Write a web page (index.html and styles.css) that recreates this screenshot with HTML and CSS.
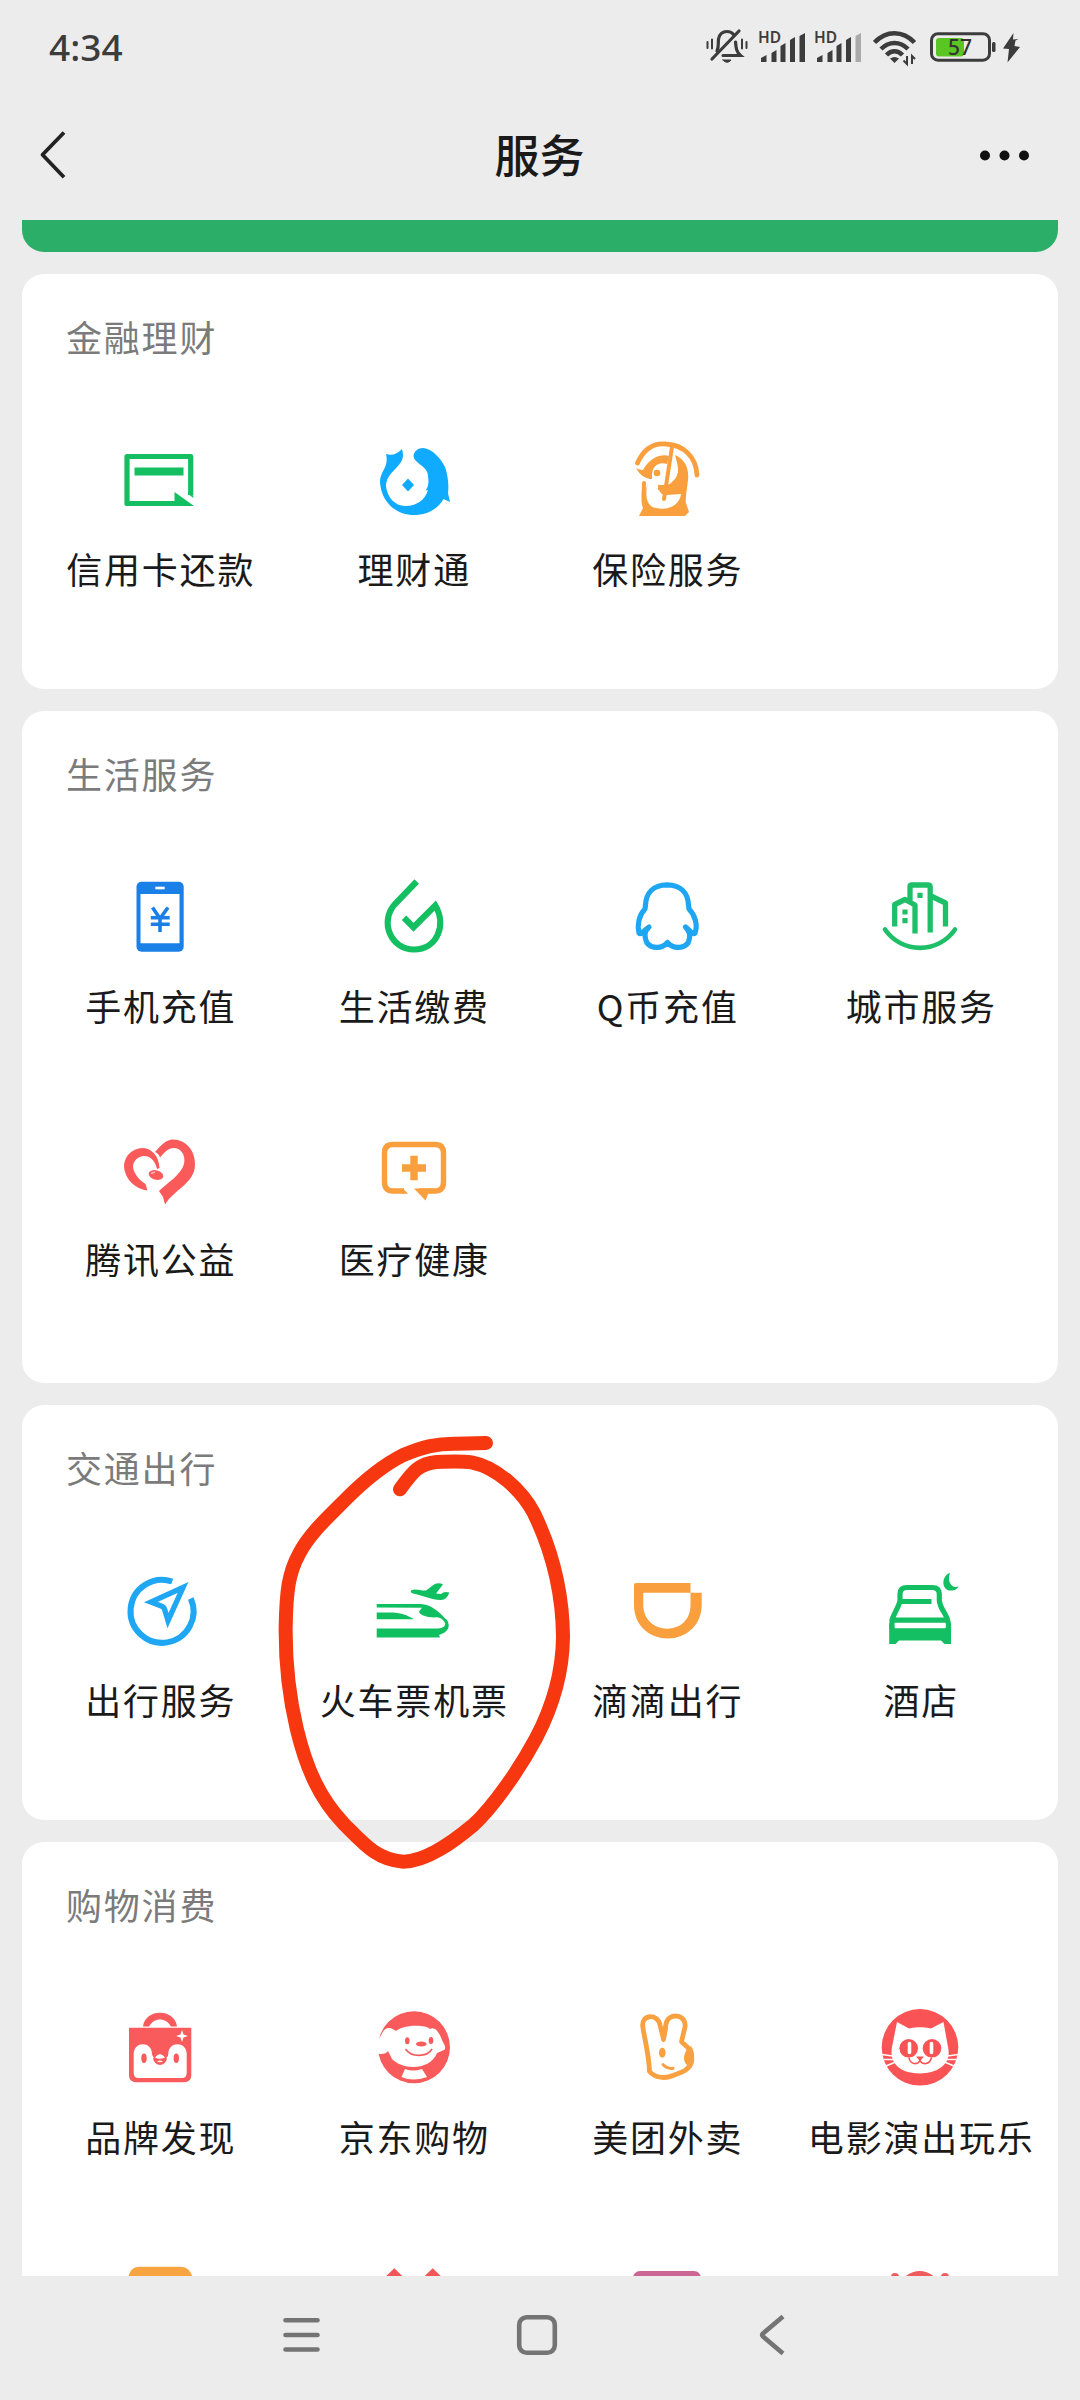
FILE: index.html
```html
<!DOCTYPE html>
<html lang="zh-CN">
<head>
<meta charset="utf-8">
<title>服务</title>
<link rel="stylesheet" href="styles.css">
</head>
<body>
<div class="screen">
  <div class="status">
    <span class="time">4:34</span>
    <div class="indicators">
      <svg class="bell" width="42" height="40" viewBox="0 0 42 40" fill="none" stroke="#3c3c3c" stroke-width="3.200" stroke-linecap="round"><path d="M11 24c2-4 1-8 1.500-12C13.500 7 17 4.500 21 4.500c3 0 5 1 6.500 3M29.500 15c.5 6 1 10 5 13.500H17"/><path d="M33 4L6 32"/><path d="M1.500 15v6M6 12.500v9M36 12.500v9M40.500 15v6" stroke-width="2"/><path d="M17 33h8c-2 3-6 3-8 0z" fill="#3c3c3c" stroke-width="1"/></svg>
      <svg class="signal" width="48" height="40" viewBox="0 0 48 40" fill="#3c3c3c"><text class="hd" x="0" y="16" textLength="23">HD</text><path d="M3 35v-4l5.500-3v7zM13.500 35v-9l5-3v12zM22.500 35V19l5-3v19zM32 35V13l5-3v25zM41.500 35V9l5.500-3v29z"/></svg>
      <svg class="signal second" width="48" height="40" viewBox="0 0 48 40" fill="#3c3c3c"><text class="hd" x="0" y="16" textLength="23">HD</text><path d="M3 35v-4l5.500-3v7zM13.500 35v-9l5-3v12zM22.500 35V19l5-3v19zM32 35V13l5-3v25z"/><path d="M41.500 35V9l5.500-3v29z" fill="#aaa"/></svg>
      <svg class="wifi" width="44" height="40" viewBox="0 0 44 40" fill="none" stroke="#3c3c3c" stroke-width="4.500"><path d="M1.500 15.500C13 3 30 3 41.500 15.500M8 22c8-8 19-8 27 0M13.500 28c5-5 11-5 16 0"/><path d="M17 31.500c3-2 6-2 9 0L21.500 36z" fill="#3c3c3c" stroke="none"/><path d="M34 29v8l-3.500-3.500M39 37v-8l3 3" stroke-width="2"/></svg>
      <svg class="battery" width="92" height="40" viewBox="0 0 92 40"><rect x="1.500" y="6.700" width="58" height="26.500" rx="6.500" fill="none" stroke="#3c3c3c" stroke-width="3"/><rect x="6" y="11" width="28" height="18.500" rx="3" fill="#5bc524"/><text class="level" x="18" y="28">57</text><rect x="62" y="15" width="3.500" height="10" rx="1.500" fill="#3c3c3c"/><path d="M83.500 6L73 21.500l6 .5-1.500 13.500L90 20l-5.500-1 1-5.500 3-1.500-5.500.5z" fill="#3c3c3c"/></svg>
    </div>
  </div>
  <div class="header">
    <svg width="40" height="56" viewBox="0 0 40 56" fill="none" stroke="#222" stroke-width="3.800" stroke-linejoin="round"><path d="M26 5.500L4.500 27.800 26 50.200"/></svg>
    <h1>服务</h1>
    <svg width="52" height="16" viewBox="0 0 52 16" fill="#111"><circle cx="6" cy="8.500" r="5"/><circle cx="25.500" cy="8.500" r="5"/><circle cx="45" cy="8.500" r="5"/></svg>
  </div>

  <main>
    <div class="banner"></div>

    <section class="card">
      <h2>金融理财</h2>
      <div class="grid">
        <div class="item"><svg viewBox="-42 -42 84 84" fill="none" stroke="#13bf60" stroke-width="5.200"><path d="M30.700 15V-23.500H-33V23.500H20" stroke-linejoin="round"/><path d="M-25.500-12.500h49v8h-49zM14.500 12L34 26H14.500zM28.200 12l5.100 3.800V18l-5.100-4z" fill="#13bf60" stroke="none"/></svg><span>信用卡还款</span></div>
        <div class="item"><svg viewBox="-42 -42 84 84" fill="#10aaff"><path d="M-27-26C-21-24-16-26-11-31-10-27-9-23-12-18-18-9-27-5-27 6-26 17-18 26-8 26 4 26 12 20 15 10L12.500 10.500C16 6 16 1 14.500-7 12-15 1-17 .5-24 1-29 5-32 10-32 20-31 28-21 32-13 35-5 36 6 35 13L37 22 30.500 19C25 29 14 35 1 35-18 35-32 21-33 2-33-5-29-10-27.500-14-26-18-26-22-27-26zM-5-1.500L1 5-5 11.500-11 5z"/></svg><span>理财通</span></div>
        <div class="item"><svg viewBox="-42 -42 84 84" fill="#fa9f3d"><path d="M-29.500-17C-22-34-11-37-1-36 17-35 29-23 30-5" fill="none" stroke="#fa9f3d" stroke-width="4.800" stroke-linecap="round"/><path d="M-24-10C-16-24-5-26 2-24l-2 8C-9-19-15-13-15-5v4C-22-1-27-5-31-12c4 2 6 2 7 2zM8-25c11 5 14 14 13 25-1 10-3 18-2 23l3 9-4 4h-46l4-8c3-4 2-10 2-16l5-15c-6 15-5 29 6 31C3 31 13 24 14 14L0 15c-4 0-7-2-8-5h-1V5h5l7-1C7 0 11-3 11-10 11-16 9-20 8-25z"/><path d="M-23 3c0 12-2 18 1 25M5-33L-3 19" fill="none" stroke="#fa9f3d" stroke-width="4" stroke-linecap="round"/><circle cx="-10" cy="-7" r="3.300"/></svg><span>保险服务</span></div>
      </div>
    </section>

    <section class="card tall">
      <h2>生活服务</h2>
      <div class="grid">
        <div class="item"><svg viewBox="-42 -42 84 84"><rect x="-23.500" y="-35.300" width="47.200" height="70" rx="5" fill="#1a80e8"/><path d="M-19.500-23h39v49.300h-39z" fill="#fff"/><path d="M-4.700-29h9.400" stroke="#fff" stroke-width="2.600"/><path d="M-7.500-9.500L0 1.500 8-9.500M0 1.500V15M-9.200.8H9.700M-9.200 7.200H9.700" fill="none" stroke="#1a80e8" stroke-width="3.600"/></svg><span>手机充值</span></div>
        <div class="item"><svg viewBox="-42 -42 84 84" fill="none" stroke="#13bf60" stroke-width="6.200"><path d="M3.700-35.500L-18-13C-34 5-22 32.500 1 32.500 24 32.500 34 8 22.300-11.500L.5 10.300-9 .8"/></svg><span>生活缴费</span></div>
        <div class="item"><svg viewBox="-42 -42 84 84" fill="none" stroke="#1ea6f2" stroke-width="5.200" stroke-linejoin="round"><path d="M0-32.200C-14-32-21-24-21.500-12L-22-8C-28-2-30 8-28 16-27 18-24 15-22 13L-18 10C-23 15-23 19-20 26-15 32-5 32 .5 25.500 6 32 16 32 21 26 24 19 23 15 18.500 10L22 13C24 15 27 18 28 16 31 8 28-2 22-8L21.500-12C21-24 14-32 0-32.200z"/></svg><span>Q币充值</span></div>
        <div class="item"><svg viewBox="-42 -42 84 84" fill="none" stroke="#1ebf68" stroke-width="5.300" stroke-linejoin="round"><path d="M-35 12.500C-18 37 18 37 35 12.500" stroke-linecap="round" stroke-width="4.600"/><path d="M-25.300 9.500V-12.500L-15-17.500-5-12V16.500M-10-16V-30.500Q-10-32-8-32H8Q10.200-32 10.200-30V15.500M12-20.500L25.500-14V9.500"/><path d="M-2.600-24.300h5.200v5.200h-5.200zM-17.600-7.600h5.200v5.200h-5.200zM-17.600 1h5.200v5.200h-5.200z" fill="#1ebf68" stroke="none"/></svg><span>城市服务</span></div>
        <div class="item"><svg viewBox="-42 -42 84 84" fill="#fa5a5a"><path d="M-12.500 20.500C-28 18-36 6-36-5-35-15-27-21.500-18-22-9-22-1-15-.5-2L-3-1C-5-10-10-14-16-14-22-14-27-9-27-3-26 5-19 11-14.500 14zM-5-18C2-26 6-30 13-30.500 26-30 35-20 35-6 35 5 29 11 21 18 14 24 10 27 5 34.500L3 27-1 21C7 13 21 5 24-6 26-16 20-22 14-22 7-21.500 5-18 0-12.500-1-15-2-17-5-18z"/><ellipse cx="-4" cy="5" rx="7.500" ry="4.600" transform="rotate(16 -4 5)"/><path d="M-9 3.500l4-1.500" stroke="#fbb" stroke-width="1.500"/></svg><span>腾讯公益</span></div>
        <div class="item"><svg viewBox="-42 -42 84 84" fill="none" stroke="#fa9f3d" stroke-width="5.400"><path d="M-9 21H-20Q-28.500 21-28.500 12V-17Q-28.500-25.500-20-25.500H22Q30.500-25.500 30.500-17V12Q30.500 21 22 21H6"/><path d="M-10 18.400l5 5.300h-6zM1 18.400L12.500 30.500 15.500 23H21v-4.600zM-2.700-14.300h7.400v8.600H13v7.400H4.700v8.600h-7.400V1.700H-11v-7.400h8.300z" fill="#fa9f3d" stroke="none"/></svg><span>医疗健康</span></div>
      </div>
    </section>

    <section class="card">
      <h2>交通出行</h2>
      <div class="grid">
        <div class="item"><svg viewBox="-42 -42 84 84" fill="none" stroke="#1fa7f4" stroke-width="6"><path d="M12.200-29.500A31.500 31.500 0 1 0 30.800-12.500"/><path d="M23-23.500L-9-9 1.800-4.800Q4-4 4.500-2L8 9.500z" stroke-width="5.400" stroke-linejoin="miter"/></svg><span>出行服务</span></div>
        <div class="item"><svg viewBox="-42 -42 84 84" fill="#10bf60"><path d="M-36.300-7H8C21-6 27 3 34 9 38 16 35 21 26 24L27 26.500H-36.300V17.600H25C30 17 33 15 32 12 30 8 27 6.500 24 6.300 15 7 5 4 6.300 0L9-3.300-36.300-3.500zM-36.300 1.500H-20C-12 2-6 4 1 8.200H-36.300z"/><path d="M-2-20.500C2-23 8-20 13-20.500L21-26.500Q26-29 30-26.500L23-17.500 28-17Q31-20 36.300-18.500C35-14 32-11 28-11 18-11 9-16 0-17.500Q-3-18.500-2-20.500z"/></svg><span>火车票机票</span></div>
        <div class="item"><svg viewBox="-42 -42 84 84" fill="#fa9f3d"><path fill-rule="evenodd" d="M-31-28H23.500V-18.300H34.700V-6C34.700 14 19 27.500 1 27.500-18 27.500-33 14-33-6V-26Q-33-28-31-28zM-23.700-18.300V-6C-23.700 9-12 17.700 0 17.700 13 17.700 23.500 9 23.500-6V-18.300z"/></svg><span>滴滴出行</span></div>
        <div class="item"><svg viewBox="-42 -42 84 84" fill="none" stroke="#13bf62" stroke-width="5.200"><path d="M-28 19V9C-26 2-20-6-20-11V-17Q-20-23.500-13-23.500H12Q19.300-23.500 19.300-17V-11C20 0 28 2 28.500 14V19M-20-9.500H11.500M-28 9.200H28"/><path d="M-30.800 12L-25 17.300H25L31 12V33H24.500L21 29.500H-21L-24.500 33h-6.300zM30-38.500C20-34 22-19 32-20.500 35-20.500 37-22 38.500-24.500 31-22 27-30 30-38.500z" fill="#13bf62" stroke="none"/></svg><span>酒店</span></div>
      </div>
    </section>

    <section class="card">
      <h2>购物消费</h2>
      <div class="grid">
        <div class="item"><svg viewBox="-42 -42 84 84" fill="#f95b5c"><path d="M-17-21.500C-15-40 15-40 17-21.500H11C6-31-6-31-11-21.500z"/><path d="M-31-20.300H31.300V27Q31.300 34.300 24 34.300H-24Q-31 34.300-31 27z"/><path d="M-26.300 6C-26.300-7-8-7-8 6-7 10-5 11-4 9Q0 4 4 9C5 11 8 10 8.300 6 8.300-7 26.700-7 26.700 6V25Q26.700 30 22 30H-21.500Q-26.300 30-26.300 25z" fill="#fff"/><ellipse cx="-16" cy="10.300" rx="2.700" ry="4.700"/><ellipse cx="16.300" cy="10.300" rx="2.700" ry="4.700"/><path d="M-7 10.500Q0 6 7 10.500C5 19-5 19-7 10.500z"/><path d="M-5 9.500Q0 3 5 9.500-1 12-5 9.500zM-3 13.500Q0 11.500 3 13.500 0 15-3 13.500zM22-18l1.500 4.500L28-12l-4.500 1.500L22-6l-1.500-4.500L16-12l4.500-1.500z" fill="#fff"/></svg><span>品牌发现</span></div>
        <div class="item"><svg viewBox="-42 -42 84 84" fill="#f95b5c"><circle cx="1" cy="-.7" r="36"/><path d="M-35-8C-31-13-30-20-24-20-21-20-19-18-17-17-10-23 12-24 17-19 22-22 26-16 29-8 31-3 34-1 31 2L24 5C17 23-11 22-21 11L-25 3C-27 6-31 7-38 5z" fill="#fff"/><ellipse cx="-5.700" cy="-7.300" rx="2.300" ry="3.500"/><ellipse cx="18" cy="-7.500" rx="2.300" ry="3.500"/><ellipse cx="8.300" cy="-4" rx="5.300" ry="2.500"/><path d="M-7.500 1C-2 9.500 14 9.500 19 1" fill="none" stroke="#f95b5c" stroke-width="1.600"/><path d="M-8 21Q0 24 9 21L14 29Q0 34-11.500 29z" fill="#fff"/></svg><span>京东购物</span></div>
        <div class="item"><svg viewBox="-42 -42 84 84" fill="none" stroke="#f9a140" stroke-width="4.800" stroke-linejoin="round"><path d="M-24-20C-27-34-9-35-7-23L-3.500-9-1-24C1-36 20-34 18-21L14.500-6.500C15-4 27 0 24.500 14 22 23 12 25 6 27.500-2 31-12 30-17.500 23.500-18 7-22-7-24-20z"/><path d="M-5-20L-3.500-8-1-20" stroke-width="4"/><path d="M24-2C30 7 26 18 20 17 14 12 18 1 24-2z" fill="#f9a140" stroke="none"/><ellipse cx="-4.700" cy="4.700" rx="3.300" ry="5" fill="#f9a140" stroke="none"/><path d="M-4 16.500Q0 21 6 20.300" stroke-width="3" stroke-linecap="round"/></svg><span>美团外卖</span></div>
        <div class="item"><svg viewBox="-42 -42 84 84" fill="#f95355"><circle cy="-.7" r="38.300"/><path d="M-23-26L-11-19.500Q0-22 11-19.500L23.500-26 28-1C32 15 19 25.500 0 25.500-20 25.500-31 15-28-1z" fill="#fff"/><path d="M-38 6.500l14 2M-36 11.500l12 0M-34 18l12-5M38 6.500l-14 2M36 11.500l-12 0M34 18l-12-5" stroke="#fff" stroke-width="1.700"/><circle cx="-11.300" cy=".3" r="9.300"/><circle cx="12" cy=".3" r="9.300"/><path d="M-4 8.500H4L1 12V14h-2v-2z"/><path d="M-11 9.500C-10 17-2 17 0 12.500 2 17 10 17 11.500 9.500" fill="none" stroke="#f95355" stroke-width="1.600"/><path d="M-10.500-4.500v9M11.500-4.500v9" stroke="#fff" stroke-width="3.600" stroke-linecap="round"/></svg><span>电影演出玩乐</span></div>
        <div class="item"><svg viewBox="-42 -42 84 84"><path d="M-32-23C-30-31-27-34.300-20-34.300H20C27-34.300 30-31 33-23z" fill="#f8a443"/></svg></div>
        <div class="item"><svg viewBox="-42 -42 84 84" fill="none" stroke="#f25557" stroke-width="5.500"><path d="M-29-19L-18.700-29-8.500-19M9.500-19L19.700-29 30-19"/></svg></div>
        <div class="item"><svg viewBox="-42 -42 84 84"><rect x="-34" y="-30" width="68" height="50" rx="7" fill="#cb6594"/></svg></div>
        <div class="item"><svg viewBox="-42 -42 84 84" fill="#ee5c5e"><path d="M-18-22Q0-38 17-22z"/><circle cx="-25" cy="-24" r="4"/><circle cx="25" cy="-24" r="4"/></svg></div>
      </div>
    </section>
  </main>

  <nav>
    <svg width="44" height="44" viewBox="0 0 44 44" stroke="#747474" stroke-width="4.600" stroke-linecap="round"><path d="M5.500 7.300h32M5.500 22h32M5.500 36.500h32"/></svg>
    <svg width="44" height="44" viewBox="0 0 44 44" fill="none" stroke="#747474" stroke-width="4.600"><rect x="4.200" y="4.200" width="35.600" height="35.600" rx="7.500"/></svg>
    <svg width="44" height="44" viewBox="0 0 44 44" fill="none" stroke="#747474" stroke-width="4.600" stroke-linejoin="round"><path d="M33 3.500L13 20.500Q11.500 22 13 23.500L33 40.500"/></svg>
  </nav>

  <svg class="mark" viewBox="0 0 990 1440" fill="none" stroke="#f6370f" stroke-width="42" stroke-linecap="round" stroke-linejoin="round"><path d="M420 238C455 190 475 160 530 156 570 155 600 153 635 157 710 172 785 240 822 310 880 430 908 560 909 680 908 800 870 905 828 985 780 1075 700 1190 640 1245 580 1295 500 1355 430 1355 350 1350 310 1300 250 1240 180 1165 140 1080 110 955 85 850 76 750 77 650 79 545 85 490 118 430 150 370 200 325 260 265 320 205 370 165 430 135 490 110 530 100 590 101L678 99"/></svg>
</div>
</body>
</html>
```
FILE: styles.css
```css
* {
  box-sizing: border-box;
}

body {
  margin: 0;
  background: #ececec;
  font-family: "Noto Sans CJK SC", "Noto Sans", sans-serif;
  color: #1a1a1a;
}

.screen {
  position: relative;
  display: flex;
  flex-direction: column;
  width: 1080px;
  height: 2400px;
  overflow: hidden;
}

.status {
  display: flex;
  justify-content: space-between;
  align-items: center;
  height: 94px;
  padding: 0 58px 0 49px;
  color: #3c3c3c;
}

.time {
  padding-bottom: 1px;
  font: 500 37px/44px "Noto Sans", sans-serif;
}

.indicators {
  display: flex;
}

.indicators svg {
  display: block;
}

.signal {
  margin-left: 10px;
}

.second {
  margin-left: 8px;
}

.wifi {
  margin-left: 11px;
}

.battery {
  margin-left: 13px;
}

.hd {
  font: 600 15.500px "Noto Sans", sans-serif;
}

.level {
  font: 500 21px "Noto Sans", sans-serif;
  fill: #333;
}

.header {
  display: flex;
  justify-content: space-between;
  align-items: center;
  height: 126px;
  padding: 0 49px 4px 38px;
}

.header h1 {
  margin: 0 0 2px 22px;
  font-size: 45px;
  font-weight: 500;
  line-height: 60px;
}

main {
  display: flex;
  flex-direction: column;
  gap: 22px;
  height: 2056px;
  padding: 0 22px;
  overflow: hidden;
}

.banner {
  flex: none;
  height: 32px;
  border-radius: 0 0 22px 22px;
  background: #2bae67;
}

.card {
  flex: none;
  padding: 40px 11px 97px;
  border-radius: 22px;
  background: #fff;
}

.tall {
  padding-bottom: 101px;
}

.card h2 {
  margin: 0 33px 80px;
  font-size: 36px;
  font-weight: 400;
  line-height: 44px;
  letter-spacing: 1.800px;
  color: #7b7b7b;
}

.grid {
  display: grid;
  grid-template-columns: repeat(4, 253.500px);
  grid-auto-rows: 154px;
  row-gap: 99px;
}

.item {
  display: flex;
  flex-direction: column;
  align-items: center;
  gap: 24px;
}

.item svg {
  width: 84px;
  height: 84px;
}

.item span {
  padding-left: 2px;
  font-size: 36px;
  line-height: 44px;
  letter-spacing: 1.800px;
  white-space: nowrap;
}

nav {
  display: flex;
  justify-content: center;
  gap: 191px;
  padding: 37px 6px 0 0;
}

.mark {
  position: absolute;
  left: 260px;
  top: 1410px;
  width: 330px;
  height: 480px;
}
```
